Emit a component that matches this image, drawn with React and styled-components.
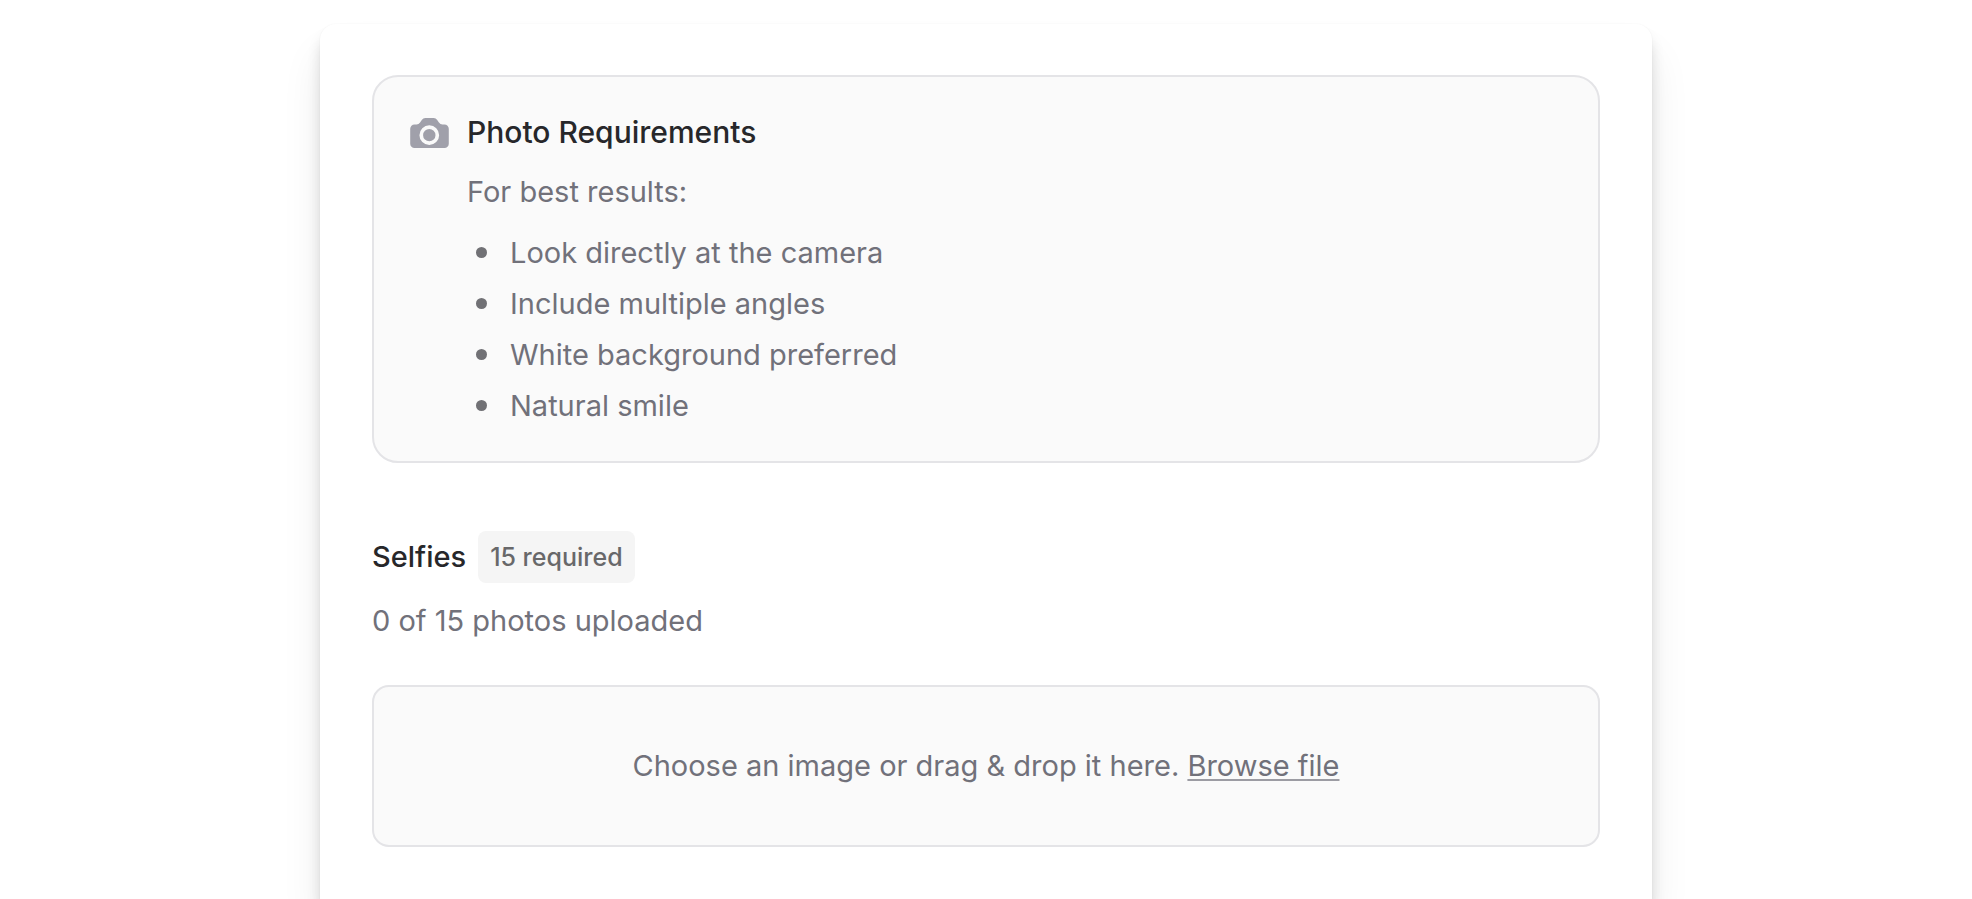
import React, { useRef } from 'react';
import styled, { createGlobalStyle } from 'styled-components';

const GlobalStyle = createGlobalStyle`
  *, *::before, *::after { box-sizing: border-box; }
  body {
    margin: 0;
    background: #fff;
    color: #71717a;
    font: 400 29px/50px Inter, "Liberation Sans", sans-serif;
  }
  h2, p, ul { margin: 0; padding: 0; font-size: inherit; }
`;

const Page = styled.main`
  min-height: 100vh;
  padding: 24px 24px 0;
  display: flex;
  justify-content: center;
  overflow: hidden;
`;

const Card = styled.div`
  width: 100%;
  max-width: 1332px;
  padding: 51px 52px 52px;
  display: flex;
  flex-direction: column;
  gap: 68px;
  background: #fff;
  border-radius: 16px 16px 0 0;
  box-shadow: 0 30px 40px rgba(0, 0, 0, 0.08), 0 12px 14px -1px rgba(0, 0, 0, 0.15),
    0 0 2px rgba(0, 0, 0, 0.05);
`;

const Panel = styled.section`
  display: flex;
  align-items: flex-start;
  gap: 18px;
  padding: 30px 36px;
  background: #fafafa;
  border: 2px solid #e4e4e7;
  border-radius: 26px;
`;

const PanelIcon = styled.span`
  height: 52px;
  display: flex;
  align-items: center;
  flex: none;
`;

const PanelBody = styled.div`
  display: flex;
  flex-direction: column;
  gap: 10px;
`;

const Title = styled.h2`
  font-size: ${(p) => (p.$large ? '30px' : '29px')};
  font-weight: 500;
  color: #27272a;
`;

const Tips = styled.ul`
  list-style: none;
  line-height: 51px;
`;

const Tip = styled.li`
  display: flex;
  align-items: center;
  gap: 23px;
  padding-left: 9px;

  &::before {
    content: '';
    width: 11px;
    height: 11px;
    flex: none;
    border-radius: 50%;
    background: #717175;
  }
`;

const Uploads = styled.section`
  display: flex;
  flex-direction: column;
`;

const Heading = styled.div`
  display: flex;
  align-items: center;
  gap: 12px;
`;

const Badge = styled.span`
  padding: 0 12px;
  border-radius: 8px;
  background: #f5f5f5;
  color: #68686a;
  font-size: 25px;
  line-height: 52px;
  font-weight: 500;
`;

const Progress = styled.p`
  margin-top: 13px;
`;

const Dropzone = styled.div`
  margin-top: 39px;
  padding: 54px 36px;
  background: #fafafa;
  border: 2px solid #e4e4e7;
  border-radius: 17px;
  text-align: center;
`;

const BrowseButton = styled.button`
  padding: 0;
  border: 0;
  background: none;
  color: inherit;
  font: inherit;
  cursor: pointer;
  text-decoration: underline #9c9ca3 2px;
  text-underline-offset: 3px;
`;

const tips = [
  'Look directly at the camera',
  'Include multiple angles',
  'White background preferred',
  'Natural smile',
];

function CameraIcon() {
  return (
    <svg width="39" height="30" viewBox="1 3 18 14" fill="#a0a0aa" aria-hidden="true">
      <path
        fillRule="evenodd"
        clipRule="evenodd"
        d="M1 8a2 2 0 0 1 2-2h.93a2 2 0 0 0 1.664-.89l.812-1.22A2 2 0 0 1 8.07 3h3.86a2 2 0 0 1 1.664.89l.812 1.22A2 2 0 0 0 16.07 6H17a2 2 0 0 1 2 2v7a2 2 0 0 1-2 2H3a2 2 0 0 1-2-2V8Zm13.5 3a4.6 4.6 0 1 1-9.2 0 4.6 4.6 0 0 1 9.2 0ZM9.9 13.9a2.9 2.9 0 1 0 0-5.8 2.9 2.9 0 0 0 0 5.8Z"
      />
    </svg>
  );
}

export default function App() {
  const fileInput = useRef(null);

  return (
    <>
      <GlobalStyle />
      <Page>
        <Card>
          <Panel>
            <PanelIcon>
              <CameraIcon />
            </PanelIcon>
            <PanelBody>
              <Title $large>Photo Requirements</Title>
              <p>For best results:</p>
              <Tips>
                {tips.map((tip) => (
                  <Tip key={tip}>{tip}</Tip>
                ))}
              </Tips>
            </PanelBody>
          </Panel>

          <Uploads>
            <Heading>
              <Title>Selfies</Title>
              <Badge>15 required</Badge>
            </Heading>
            <Progress>0 of 15 photos uploaded</Progress>
            <Dropzone>
              Choose an image or drag &amp; drop it here.{' '}
              <BrowseButton type="button" onClick={() => fileInput.current.click()}>
                Browse file
              </BrowseButton>
              <input ref={fileInput} type="file" accept="image/*" multiple hidden aria-label="Selfies" />
            </Dropzone>
          </Uploads>
        </Card>
      </Page>
    </>
  );
}
